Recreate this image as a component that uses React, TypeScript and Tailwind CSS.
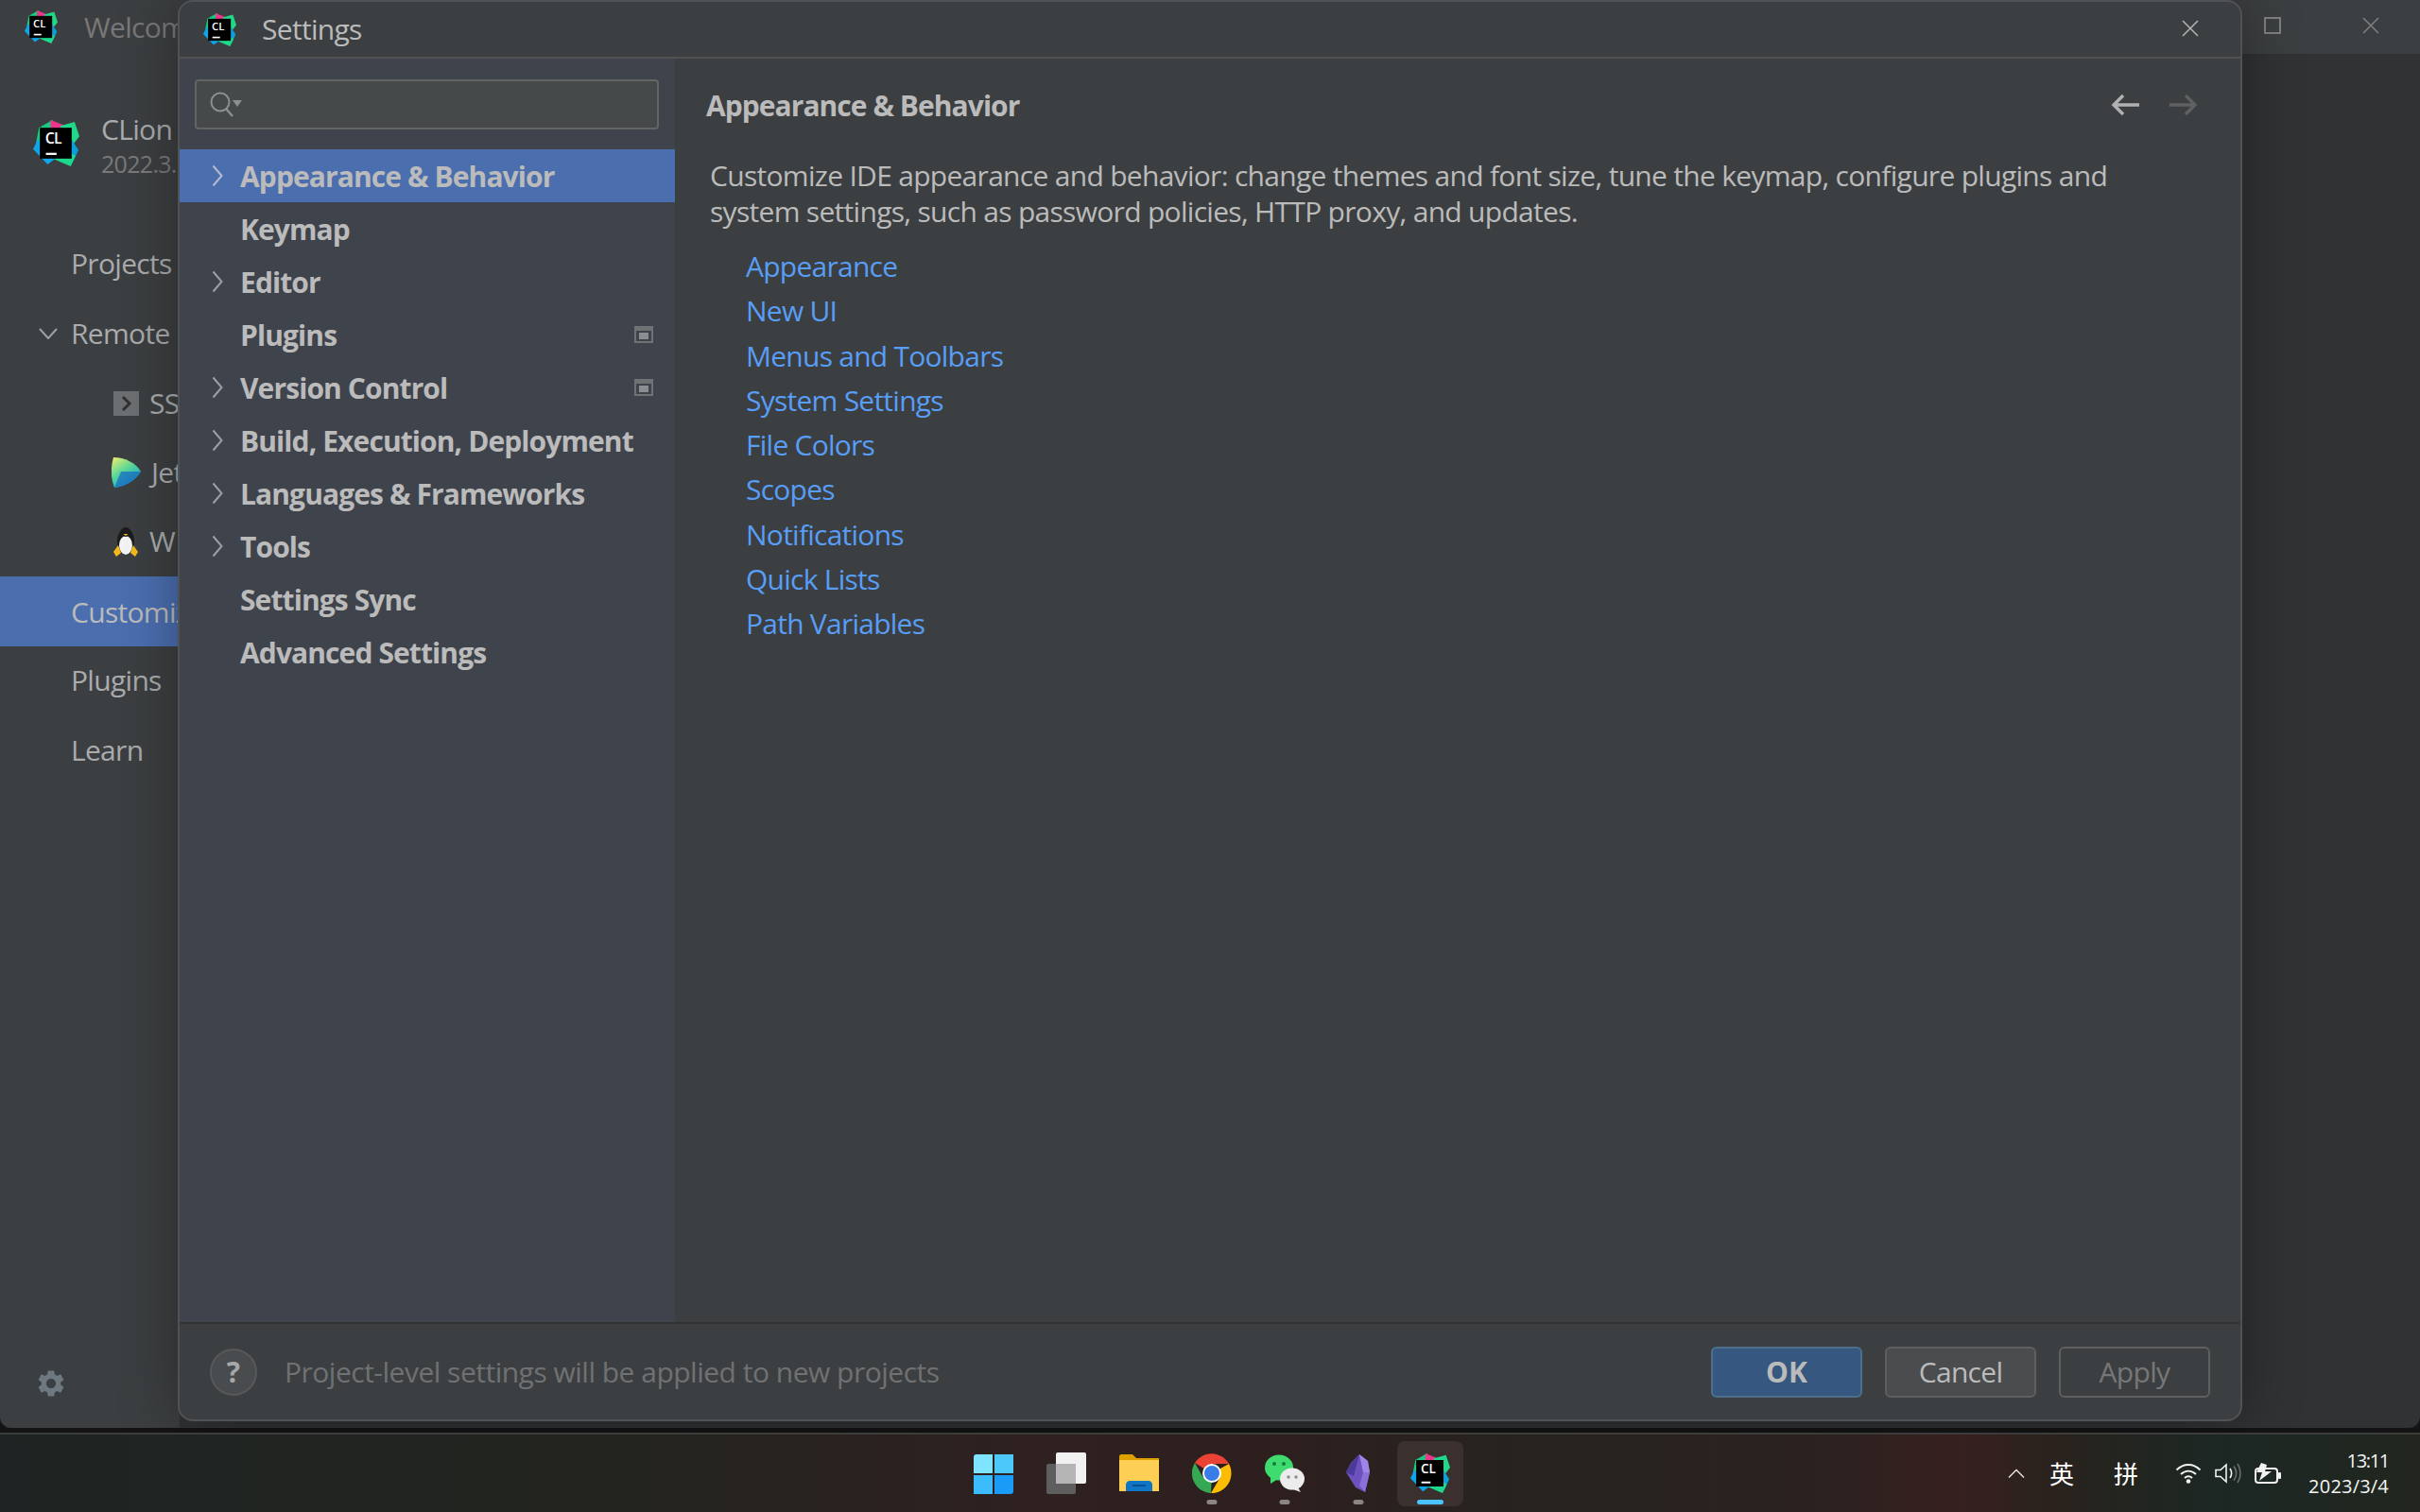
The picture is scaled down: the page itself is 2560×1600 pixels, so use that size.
import React from "react";
import { MdSettings } from "react-icons/md";

function Logo({ className }: { className: string }) {
  return (
    <svg viewBox="0 0 48 48" className={className}>
      <polygon points="3,24 6,8 20,0 26,9 12,34" fill="#18c97f" />
      <polygon points="18,0 31,5 30,10 18,10" fill="#ed358c" />
      <polygon points="28,6 43,2 48,17 41,26 32,18" fill="#21d789" />
      <polygon points="40,20 47,31 41,44 30,34" fill="#0a9fd8" />
      <polygon points="20,40 30,30 44,37 39,48" fill="#1ed98c" />
      <polygon points="0,30 5,20 26,38 15,46" fill="#0ea5e9" />
      <rect x="7" y="8" width="33" height="32" fill="#000" />
      <text x="12.5" y="24.5" fill="#fff" fontSize="15.5" fontWeight="600" fontFamily="'Open Sans',sans-serif">CL</text>
      <rect x="13.3" y="34" width="11" height="2.2" fill="#fff" />
    </svg>
  );
}

function Chevron({ color = "#9da0a2" }: { color?: string }) {
  return (
    <svg viewBox="0 0 12 24" className="w-[12px] h-[24px] shrink-0">
      <polyline points="1.5,1.5 10.5,12 1.5,22.5" fill="none" stroke={color} strokeWidth="2" />
    </svg>
  );
}

function ProjectBadge() {
  return (
    <svg viewBox="0 0 20 18" className="ml-auto mr-[23px] w-[20px] h-[18px] shrink-0">
      <rect x="0" y="0" width="20" height="18" fill="#6e7274" />
      <rect x="2" y="5" width="16" height="11" fill="#3f434c" />
      <rect x="5" y="7" width="10" height="7" fill="#8a8e90" />
    </svg>
  );
}

const tree: [string, boolean, boolean][] = [
  ["Keymap", false, false],
  ["Editor", true, false],
  ["Plugins", false, true],
  ["Version Control", true, true],
  ["Build, Execution, Deployment", true, false],
  ["Languages & Frameworks", true, false],
  ["Tools", true, false],
  ["Settings Sync", false, false],
  ["Advanced Settings", false, false],
];

const links = ["Appearance", "New UI", "Menus and Toolbars", "System Settings", "File Colors", "Scopes", "Notifications", "Quick Lists", "Path Variables"];

function TreeRow({ label, arrow, badge, selected }: { label: string; arrow: boolean; badge: boolean; selected?: boolean }) {
  return (
    <div className={`h-[56px] flex items-center pl-[34px] ${selected ? "bg-[#4b6eaf]" : ""}`}>
      <span className="w-[20px] shrink-0">{arrow ? <Chevron color={selected ? "#b5bccb" : "#9da0a2"} /> : null}</span>
      <span className="ml-[10px] font-bold text-[30px] tracking-[-0.9px] text-[#bbbbbb] whitespace-nowrap">{label}</span>
      {badge ? <ProjectBadge /> : null}
    </div>
  );
}

function Welcome() {
  return (
    <div className="flex-1 flex flex-col bg-[#313233] rounded-b-[12px] overflow-hidden">
      <div className="h-[57px] shrink-0 bg-[#3c3f41] flex items-center pl-[26px]">
        <Logo className="w-[35px] h-[35px]" />
        <span className="ml-[28px] w-[100px] overflow-hidden whitespace-nowrap text-[30px] tracking-[-0.7px] text-[#787878]">Welcom</span>
        <svg viewBox="0 0 18 18" className="ml-auto mr-[86px] mb-[3px] w-[18px] h-[18px]">
          <rect x="1" y="1" width="16" height="16" fill="none" stroke="#7d7f81" strokeWidth="2" />
        </svg>
        <svg viewBox="0 0 18 18" className="mr-[43px] mb-[3px] w-[18px] h-[18px]">
          <path d="M1 1 L17 17 M17 1 L1 17" stroke="#7d7f81" strokeWidth="1.6" />
        </svg>
      </div>
      <div className="flex-1 flex">
        <div className="w-[190px] overflow-hidden whitespace-nowrap bg-[#3c3f41] flex flex-col text-[#a9abad] text-[30px] tracking-[-0.7px]">
          <div className="flex items-center pl-[35px] mt-[70px] h-[49px]">
            <Logo className="w-[49px] h-[49px] shrink-0" />
            <div className="ml-[23px] pt-[6px] flex flex-col leading-[36px] overflow-hidden">
              <span>CLion</span>
              <span className="text-[25px] text-[#787a7c]">2022.3.</span>
            </div>
          </div>
          <div className="mt-[67px] h-[74px] pb-[3px] pl-[75px] flex items-center">Projects</div>
          <div className="h-[74px] pb-[3px] flex items-center pl-[41px]">
            <svg viewBox="0 0 20 12" className="w-[20px] h-[12px] shrink-0"><polyline points="1,1 10,11 19,1" fill="none" stroke="#9da0a2" strokeWidth="2" /></svg>
            <span className="ml-[14px]">Remote</span>
          </div>
          <div className="h-[73px] pb-[2px] flex items-center pl-[120px]">
            <svg viewBox="0 0 27 26" className="w-[27px] h-[26px] shrink-0"><rect width="27" height="26" fill="#6d7072" /><polyline points="10,6 17,13 10,20" fill="none" stroke="#2f3133" strokeWidth="3" /></svg>
            <span className="ml-[11px]">SS</span>
          </div>
          <div className="h-[73px] pb-[2px] flex items-center pl-[118px]">
            <svg viewBox="0 0 31 32" className="w-[31px] h-[32px] shrink-0">
              <defs>
                <linearGradient id="jet" x1="0" y1="0" x2="0.6" y2="1"><stop offset="0" stopColor="#f5ee6c" /><stop offset="0.5" stopColor="#5bd89a" /><stop offset="1" stopColor="#10a6d6" /></linearGradient>
              </defs>
              <path d="M2 0 C14 0 26 6 31 15 C26 24 14 31 3 32 C-1 22 -1 10 2 0 Z" fill="url(#jet)" />
              <path d="M10 15 L31 15 C26 24 14 31 3 32 Z" fill="#1b6dc1" opacity="0.75" />
            </svg>
            <span className="ml-[11px]">Jet</span>
          </div>
          <div className="h-[73px] pb-[2px] flex items-center pl-[119px]">
            <svg viewBox="0 0 28 32" className="w-[28px] h-[32px] shrink-0">
              <ellipse cx="14" cy="16" rx="9" ry="14" fill="#1c1c1c" />
              <ellipse cx="14" cy="20" rx="7" ry="10" fill="#f4f4f4" />
              <circle cx="14" cy="6" r="5" fill="#1c1c1c" />
              <path d="M11.5 8 L16.5 8 L14 10 Z" fill="#f5b91b" />
              <path d="M1 27 L6 20 L9 28 L4 32 Z M27 27 L22 20 L19 28 L24 32 Z" fill="#f5b91b" />
            </svg>
            <span className="ml-[11px]">W</span>
          </div>
          <div className="h-[74px] pl-[75px] flex items-center bg-[#4b6eaf] text-[#bbbbbb]">Customiz</div>
          <div className="h-[74px] pb-[3px] pl-[75px] flex items-center">Plugins</div>
          <div className="h-[74px] pb-[3px] pl-[75px] flex items-center">Learn</div>
          <div className="mt-auto pb-[30px] pl-[37px]">
            <MdSettings className="w-[34px] h-[34px] text-[#6e7881]" />
          </div>
        </div>
        <div className="flex-1" />
      </div>
    </div>
  );
}

function Dialog() {
  return (
    <div className="absolute left-[188px] top-0 w-[2184px] h-[1504px] flex flex-col bg-[#3c3f41] border-2 border-[#505355] rounded-[16px] overflow-hidden shadow-[0_0_60px_rgba(0,0,0,0.35)]">
      <div className="h-[60px] shrink-0 flex items-center border-b-2 border-[#515151] pl-[25px] pr-[44px]">
        <Logo className="w-[35px] h-[35px]" />
        <span className="ml-[27px] pb-[1px] text-[30px] tracking-[-0.7px] text-[#bbbbbb]">Settings</span>
        <svg viewBox="0 0 18 18" className="ml-auto mb-[2px] w-[18px] h-[18px]">
          <path d="M1 1 L17 17 M17 1 L1 17" stroke="#b0b2b3" strokeWidth="1.6" />
        </svg>
      </div>
      <div className="flex-1 flex min-h-0">
        <div className="w-[524px] shrink-0 bg-[#3f434c] flex flex-col">
          <div className="mt-[22px] mx-[16px] h-[53px] shrink-0 w-[491px] bg-[#45494a] border-2 border-[#646464] rounded-[4px] flex items-center pl-[14px]">
            <svg viewBox="0 0 36 28" className="w-[36px] h-[28px]">
              <circle cx="11" cy="11" r="9.5" fill="none" stroke="#8c8f91" strokeWidth="2" />
              <path d="M17 18 L24 26" stroke="#8c8f91" strokeWidth="2.4" />
              <path d="M24 9 L34 9 L29 16 Z" fill="#8c8f91" />
            </svg>
          </div>
          <div className="mt-[21px]">
            <TreeRow label="Appearance & Behavior" arrow badge={false} selected />
            {tree.map(([l, a, b]) => (
              <TreeRow key={l} label={l} arrow={a} badge={b} />
            ))}
          </div>
        </div>
        <div className="flex-1 min-w-0 flex flex-col pl-[33px] pr-[45px]">
          <div className="mt-[29px] h-[40px] flex items-center">
            <span className="font-bold text-[30px] tracking-[-0.95px] text-[#bbbbbb]">Appearance & Behavior</span>
            <svg viewBox="0 0 30 24" className="ml-auto w-[30px] h-[24px]">
              <path d="M30 12 L3 12 M13 2 L3 12 L13 22" fill="none" stroke="#afb1b3" strokeWidth="3.4" />
            </svg>
            <svg viewBox="0 0 30 24" className="ml-[32px] w-[30px] h-[24px]">
              <path d="M0 12 L27 12 M17 2 L27 12 L17 22" fill="none" stroke="#5e6061" strokeWidth="3.4" />
            </svg>
          </div>
          <p className="mt-[36px] ml-[4px] text-[30px] leading-[38px] tracking-[-0.7px] text-[#bbbbbb] whitespace-nowrap">
            Customize IDE appearance and behavior: change themes and font size, tune the keymap, configure plugins and<br />
            system settings, such as password policies, HTTP proxy, and updates.
          </p>
          <div className="mt-[15px] ml-[42px] flex flex-col">
            {links.map((l) => (
              <span key={l} className="h-[47.25px] flex items-center text-[30px] tracking-[-0.75px] text-[#589df6]">{l}</span>
            ))}
          </div>
        </div>
      </div>
      <div className="h-[103px] shrink-0 flex items-center border-t-2 border-[#323232] pl-[32px] pr-[32px]">
        <div className="w-[50px] h-[50px] rounded-full bg-[#494c4e] border-2 border-[#565859] flex items-center justify-center text-[30px] font-bold text-[#a5a7a9]">?</div>
        <span className="ml-[29px] text-[30px] tracking-[-0.5px] text-[#6f7173]">Project-level settings will be applied to new projects</span>
        <div className="ml-auto flex gap-[24px]">
          <div className="w-[160px] h-[54px] rounded-[6px] bg-[#365880] border-2 border-[#4c708c] flex items-center justify-center font-bold text-[30px] text-[#bbbbbb]">OK</div>
          <div className="w-[160px] h-[54px] rounded-[6px] bg-[#4a4c4e] border-2 border-[#5e6060] flex items-center justify-center text-[30px] tracking-[-0.7px] text-[#bbbbbb]">Cancel</div>
          <div className="w-[160px] h-[54px] rounded-[6px] bg-[#3c3f41] border-2 border-[#5e6060] flex items-center justify-center text-[30px] tracking-[-0.7px] text-[#777777]">Apply</div>
        </div>
      </div>
    </div>
  );
}

function Dot() {
  return <span className="absolute left-1/2 -translate-x-1/2 top-[49px] w-[11px] h-[5px] rounded-full bg-[#8b8583]" />;
}

function Taskbar() {
  return (
    <div className="h-[84px] shrink-0 border-t-2 border-[#3c3c3c] bg-[linear-gradient(90deg,#1e2423_0%,#23241f_25%,#2e2120_42%,#2e1f1f_52%,#26231e_62%,#2b2220_75%,#37201f_81%,#26231e_86%,#1c2723_92%,#22261f_100%)] flex items-center text-white relative">
      <div className="absolute left-[1030px] top-[0px] h-full flex items-center">
        <div className="w-[42px] h-[42px] grid grid-cols-2 gap-[2px] mt-[2px]">
          <span className="bg-[#7fe4ff] rounded-tl-[3px]" />
          <span className="bg-[#4dc8fa]" />
          <span className="bg-[#3dbcfb]" />
          <span className="bg-[#1a9bf5] rounded-br-[3px]" />
        </div>
        <svg viewBox="0 0 42 44" className="ml-[35px] w-[42px] h-[44px]">
          <rect x="0" y="12" width="31" height="32" rx="2" fill="#5e5e5e" />
          <rect x="10" y="0" width="32" height="33" rx="2" fill="#f1f1f1" />
          <rect x="10" y="12" width="21" height="21" fill="#b5b5b5" />
        </svg>
        <svg viewBox="0 0 42 42" className="ml-[35px] w-[42px] h-[42px]">
          <path d="M0 3 C0 2 1 1 2 1 L14 1 L18 5 L42 5 L42 40 L0 40 Z" fill="#dfa100" />
          <rect x="0" y="7" width="42" height="33" fill="#fdd055" />
          <path d="M7 40 L7 33 C7 31 9 29 11 29 L31 29 C33 29 35 31 35 33 L35 40 Z" fill="#0f76c5" />
          <rect x="14" y="33" width="14" height="2" fill="#07508f" />
        </svg>
        <div className="relative ml-[35px] w-[42px] h-[42px]">
          <svg viewBox="0 0 42 42" className="w-[42px] h-[42px]">
            <path d="M21 21 L3 10 A21 21 0 0 1 39 11 L21 11 Z" fill="#ea4335" />
            <path d="M21 21 L39 11 A21 21 0 0 1 20 42 L30 25 Z" fill="#fbbc04" />
            <path d="M21 21 L20 42 A21 21 0 0 1 3 10 L12 26 Z" fill="#34a853" />
            <circle cx="21" cy="21" r="10" fill="#fff" />
            <circle cx="21" cy="21" r="8" fill="#3b7de8" />
          </svg>
          <Dot />
        </div>
        <div className="relative ml-[35px] w-[42px] h-[42px]">
          <svg viewBox="0 0 42 42" className="w-[42px] h-[42px]">
            <ellipse cx="15" cy="15" rx="15" ry="13.5" fill="#3edc6e" />
            <path d="M6 24 L6 32 L14 27 Z" fill="#3edc6e" />
            <circle cx="10" cy="11" r="2" fill="#1b7a3c" />
            <circle cx="20" cy="11" r="2" fill="#1b7a3c" />
            <ellipse cx="29" cy="27" rx="13" ry="11.5" fill="#ececec" />
            <path d="M35 36 L38 41 L30 38 Z" fill="#ececec" />
            <circle cx="25" cy="25" r="1.7" fill="#8a8a8a" />
            <circle cx="33" cy="25" r="1.7" fill="#8a8a8a" />
          </svg>
          <Dot />
        </div>
        <div className="relative ml-[44px] w-[25px] h-[42px]">
          <svg viewBox="0 0 25 42" className="w-[25px] h-[42px]">
            <polygon points="14,1 23,8 25,20 20,41 10,36 0,20 5,10" fill="#6d52bf" />
            <polygon points="14,1 23,8 25,20 18,20" fill="#9d86e6" />
            <polygon points="18,20 25,20 20,41 14,34" fill="#8a70d8" />
            <polygon points="14,1 5,10 0,20 8,24" fill="#4b3a99" />
          </svg>
          <Dot />
        </div>
        <div className="relative ml-[29px] w-[70px] h-[69px] rounded-[8px] bg-[#3a302e] flex items-center justify-center">
          <Logo className="w-[42px] h-[42px]" />
          <span className="absolute left-1/2 -translate-x-1/2 bottom-[2px] w-[28px] h-[5px] rounded-full bg-[#4cc2ff]" />
        </div>
      </div>
      <div className="ml-auto flex items-center pr-[33px]">
        <svg viewBox="0 0 18 10" className="w-[18px] h-[10px]"><polyline points="1,9.5 9,1.5 17,9.5" fill="none" stroke="#e8e8e8" strokeWidth="1.4" /></svg>
        <span className="ml-[26px] w-[27px] text-[26px] leading-[30px] font-['Noto_Sans_CJK_SC',sans-serif]">英</span>
        <span className="ml-[41px] w-[27px] text-[26px] leading-[30px] font-['Noto_Sans_CJK_SC',sans-serif]">拼</span>
        <svg viewBox="0 0 28 22" className="ml-[38px] w-[28px] h-[22px]">
          <path d="M1.5 7.5 C9 0 19 0 26.5 7.5 M6 12 C11 7.5 17 7.5 22 12 M10 16 C12.5 13.8 15.5 13.8 18 16" fill="none" stroke="#f2f2f2" strokeWidth="2" />
          <circle cx="14" cy="19.5" r="2.3" fill="#f2f2f2" />
        </svg>
        <svg viewBox="0 0 28 24" className="ml-[14px] w-[28px] h-[24px]">
          <path d="M1 8.5 L6 8.5 L12 3 L12 21 L6 15.5 L1 15.5 Z" fill="none" stroke="#f2f2f2" strokeWidth="1.6" />
          <path d="M16 7 C18 10 18 14 16 17" fill="none" stroke="#f2f2f2" strokeWidth="1.6" />
          <path d="M20 4.5 C23.5 9 23.5 15 20 19.5 M24 2 C28 8 28 16 24 22" fill="none" stroke="#6d6d6d" strokeWidth="1.6" />
        </svg>
        <svg viewBox="0 0 28 24" className="ml-[14px] w-[28px] h-[24px]">
          <rect x="1" y="7" width="23" height="15" rx="3" fill="none" stroke="#f2f2f2" strokeWidth="2" />
          <rect x="25" y="11" width="3" height="7" rx="1" fill="#f2f2f2" />
          <path d="M7 1 L2 11 L8 11 L5 20 L18 10 L11 10 L13 3 Z" fill="#f2f2f2" />
        </svg>
        <div className="ml-[29px] flex flex-col items-end text-[20px] leading-[27px] text-[#f5f5f5]">
          <span className="tracking-[-1.3px]">13:11</span>
          <span className="tracking-[0.2px]">2023/3/4</span>
        </div>
      </div>
    </div>
  );
}

export default function App() {
  return (
    <div className="w-[2560px] h-[1600px] flex flex-col bg-[#141414] overflow-hidden font-['Open_Sans',sans-serif]">
      <div className="relative h-[1516px] shrink-0 flex flex-col pb-[5px]">
        <Welcome />
        <Dialog />
      </div>
      <Taskbar />
    </div>
  );
}
